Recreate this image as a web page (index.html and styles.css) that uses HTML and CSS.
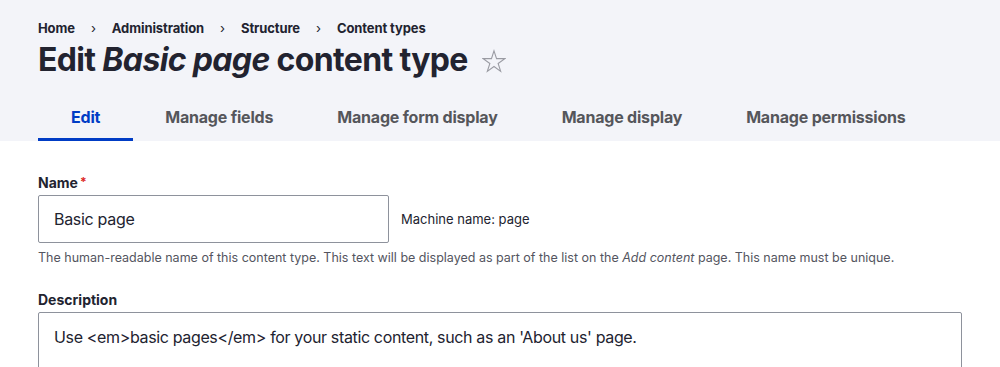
FILE: index.html
```html
<!DOCTYPE html>
<html lang="en">
<head>
<meta charset="utf-8">
<title>Edit Basic page content type</title>
<link rel="stylesheet" href="styles.css">
</head>
<body>
<header class="page-header">
  <nav class="breadcrumb">
    <a href="#">Home</a><span class="sep">›</span>
    <a href="#">Administration</a><span class="sep">›</span>
    <a href="#">Structure</a><span class="sep">›</span>
    <a href="#">Content types</a>
  </nav>
  <div class="title-row">
    <h1 class="title">Edit <em>Basic page</em> content type</h1>
    <svg class="star" viewBox="0 0 24 24" width="24" height="24" aria-hidden="true">
      <path d="M12 1.8l2.55 7.85h8.25l-6.68 4.85 2.55 7.85L12 17.5l-6.67 4.85 2.55-7.85L1.2 9.65h8.25z" fill="none" stroke="#9a9ba3" stroke-width="1.1" stroke-linejoin="miter"/>
    </svg>
  </div>
  <ul class="tabs">
    <li class="tab active"><a href="#">Edit</a></li>
    <li class="tab"><a href="#">Manage fields</a></li>
    <li class="tab"><a href="#">Manage form display</a></li>
    <li class="tab"><a href="#">Manage display</a></li>
    <li class="tab"><a href="#">Manage permissions</a></li>
  </ul>
</header>
<main class="content">
  <div class="field">
    <label class="label">Name<span class="req">*</span></label>
    <div class="name-row">
      <input class="text-input" type="text" value="Basic page">
      <span class="machine">Machine name: page</span>
    </div>
    <div class="help">The human-readable name of this content type. This text will be displayed as part of the list on the <em>Add content</em> page. This name must be unique.</div>
  </div>
  <div class="field">
    <label class="label">Description</label>
    <textarea class="textarea" rows="4">Use &lt;em&gt;basic pages&lt;/em&gt; for your static content, such as an 'About us' page.</textarea>
  </div>
</main>
</body>
</html>
```
FILE: styles.css
```css
* { box-sizing: border-box; }
html, body { margin: 0; padding: 0; }
body {
  font-family: Inter, "Noto Sans", "Liberation Sans", sans-serif;
  color: #222330;
  background: #fff;
}
a { color: inherit; text-decoration: none; }

.page-header {
  background: #f3f4f9;
  padding: 18px 38px 0;
}
.breadcrumb {
  display: flex;
  align-items: center;
  font-size: 13px;
  font-weight: 700;
  line-height: 20px;
  letter-spacing: -0.1px;
}
.breadcrumb .sep {
  margin: 0 16px;
  font-weight: 400;
}
.title-row {
  display: flex;
  align-items: center;
  margin-top: 2px;
}
.title {
  margin: 0;
  font-size: 32px;
  line-height: 40px;
  font-weight: 700;
  letter-spacing: -0.65px;
}
.title em { font-style: italic; }
.star { margin-left: 14px; margin-top: 2px; }

.tabs {
  list-style: none;
  margin: 13px 0 0;
  padding: 0;
  display: flex;
}
.tab a {
  display: block;
  height: 48px;
  line-height: 48px;
  padding: 0 32px;
  font-size: 16px;
  font-weight: 700;
  letter-spacing: -0.2px;
  color: #55565b;
  border-bottom: 3px solid transparent;
}
.tab.active a {
  padding: 0 33px;
  color: #003cc5;
  border-bottom-color: #003cc5;
}

.content {
  padding: 32px 38px 0;
}
.field { margin-bottom: 23px; }
.label {
  display: block;
  font-size: 14px;
  font-weight: 700;
  line-height: 20px;
  margin-bottom: 2px;
}
.req {
  color: #dc2323;
  margin-left: 2px;
  font-size: 12px;
  vertical-align: top;
  position: relative;
  top: -1px;
}
.name-row {
  display: flex;
  align-items: center;
}
.text-input {
  width: 351px;
  height: 48px;
  border: 1px solid #8e929c;
  border-radius: 2px;
  padding: 0 15px;
  font: 400 16px Inter, "Noto Sans", "Liberation Sans", sans-serif;
  letter-spacing: -0.3px;
  color: #222330;
  background: #fff;
}
.machine {
  margin-left: 12px;
  font-size: 13px;
  color: #222330;
}
.help {
  margin-top: 6px;
  font-size: 12.5px;
  line-height: 18px;
  color: #545560;
}
.textarea {
  display: block;
  width: 100%;
  height: 100px;
  border: 1px solid #8e929c;
  border-radius: 2px;
  padding: 12px 15px;
  font: 400 16px/24px Inter, "Noto Sans", "Liberation Sans", sans-serif;
  letter-spacing: -0.35px;
  color: #222330;
  resize: none;
}
```
